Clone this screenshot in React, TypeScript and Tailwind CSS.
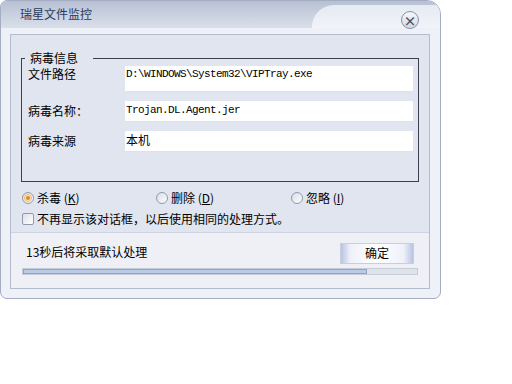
import React from "react";

const cjk = "font-['SimSun','Noto_Sans_CJK_SC',sans-serif]";

function Radio({ checked }: { checked?: boolean }) {
  return (
    <span className="flex h-[12px] w-[12px] items-center justify-center rounded-full border border-[#8f9ab0] bg-gradient-to-br from-[#d8dce5] to-white">
      {checked && (
        <span className="flex h-[8px] w-[8px] items-center justify-center rounded-full border border-[#f4bd6c] bg-[#fbe3bd]">
          <span className="h-[4px] w-[4px] rounded-full bg-[#e0872a]" />
        </span>
      )}
    </span>
  );
}

function Field({
  label,
  value,
  mono,
  tall,
}: {
  label: string;
  value: string;
  mono?: boolean;
  tall?: boolean;
}) {
  return (
    <div className={`flex ${tall ? "items-start" : "items-center"}`}>
      <div className={`w-[103px] pl-[6px] leading-[14px] ${tall ? "pt-[1px]" : "mb-[2px]"}`}>{label}</div>
      <div
        className={`w-[288px] border-b border-[#dde1ea] bg-white pl-[1px] ${
          tall ? "h-[26px] pt-[1px]" : "h-[21px] pt-[2px]"
        } ${mono ? "font-['Liberation_Mono',monospace] text-[11px] tracking-[-0.6px] leading-[14px]" : "leading-[14px]"}`}
      >
        {value}
      </div>
    </div>
  );
}

export default function App() {
  return (
    <div className={`h-[384px] w-[512px] bg-white text-[12px] text-black ${cjk}`}>
      <div className="flex h-[299px] w-[441px] flex-col overflow-hidden rounded-tl-[7px] rounded-tr-[14px] rounded-b-[7px] border border-[#a4adc2] bg-[#eef1f7]">
        {/* title bar */}
        <div className="flex h-[27px] bg-gradient-to-b from-[#b7c0d4] via-[#c9d0df] to-[#d9dfea]">
          <div className="flex-1 pl-[19px] pt-[6px] leading-[14px] text-[#2a3b5e]">瑞星文件监控</div>
          <div className="mt-[4px] flex w-[128px] justify-end rounded-tl-[22px] bg-gradient-to-b from-[#e6eaf2] to-[#f1f3f8] pr-[21px] pt-[6px]">
            <span className="flex h-[18px] w-[18px] items-center justify-center rounded-full border border-[#8791a8] bg-gradient-to-b from-[#f7f8fb] to-[#d3d8e3] text-[13px] font-bold leading-none text-[#4a5266]">
              ×
            </span>
          </div>
        </div>

        {/* body */}
        <div className="flex flex-1 flex-col pb-[9px] pl-[9px] pr-[10px] pt-[6px]">
          <div className="flex flex-1 flex-col border border-[#b3bbcd]">
            <div className="flex h-[197px] flex-col bg-[#e0e5ef] pl-[10px] pt-[16px]">
              <fieldset className="w-[398px] border border-[#3b404c] pb-[29px] pr-[5px] pt-[1px]">
                <legend className="ml-[3px] pl-[5px] pr-[15px] leading-[14px]">病毒信息</legend>
                <div className="flex flex-col gap-[9px]">
                  <Field label="文件路径" value="D:\WINDOWS\System32\VIPTray.exe" mono tall />
                  <Field label="病毒名称：" value="Trojan.DL.Agent.jer" mono />
                  <Field label="病毒来源" value="本机" />
                </div>
              </fieldset>

              <div className="ml-[1px] mt-[9px] flex h-[14px] items-center">
                <div className="flex w-[134px] items-center gap-[3px]">
                  <Radio checked />
                  <span className="leading-[14px]">
                    杀毒 (<span className="underline">K</span>)
                  </span>
                </div>
                <div className="flex w-[135px] items-center gap-[3px]">
                  <Radio />
                  <span className="leading-[14px]">
                    删除 (<span className="underline">D</span>)
                  </span>
                </div>
                <div className="flex items-center gap-[3px]">
                  <Radio />
                  <span className="leading-[14px]">
                    忽略 (<span className="underline">I</span>)
                  </span>
                </div>
              </div>

              <div className="ml-[1px] mt-[7px] flex items-center gap-[3px]">
                <span className="h-[12px] w-[12px] rounded-[2px] border border-[#8f9ab0] bg-gradient-to-br from-[#dcdfe6] to-white" />
                <span className="leading-[14px]">不再显示该对话框，以后使用相同的处理方式。</span>
              </div>
            </div>

            <div className="flex flex-1 flex-col border-t border-[#cdd3e0] bg-[#eef0f6] px-[11px] pt-[10px]">
              <div className="flex h-[21px] items-center justify-between">
                <span className="mb-[4px] pl-[4px] leading-[14px]">13秒后将采取默认处理</span>
                <button
                  type="button"
                  className="mr-[4px] h-[21px] w-[74px] border border-[#c8cedb] bg-[linear-gradient(to_right,#b9c4e2_0%,#eef1f9_13%,#ffffff_50%,#eef1f9_87%,#b9c4e2_100%)] pb-[2px] leading-[14px]"
                >
                  确定
                </button>
              </div>
              <div className="mt-[4px] flex h-[7px] border border-[#c6ccd8] bg-[#dfe3ea]">
                <div className="h-full w-[344px] border border-[#8ea3c6] bg-[#b9cbe5]" />
              </div>
            </div>
          </div>
        </div>
      </div>
    </div>
  );
}
